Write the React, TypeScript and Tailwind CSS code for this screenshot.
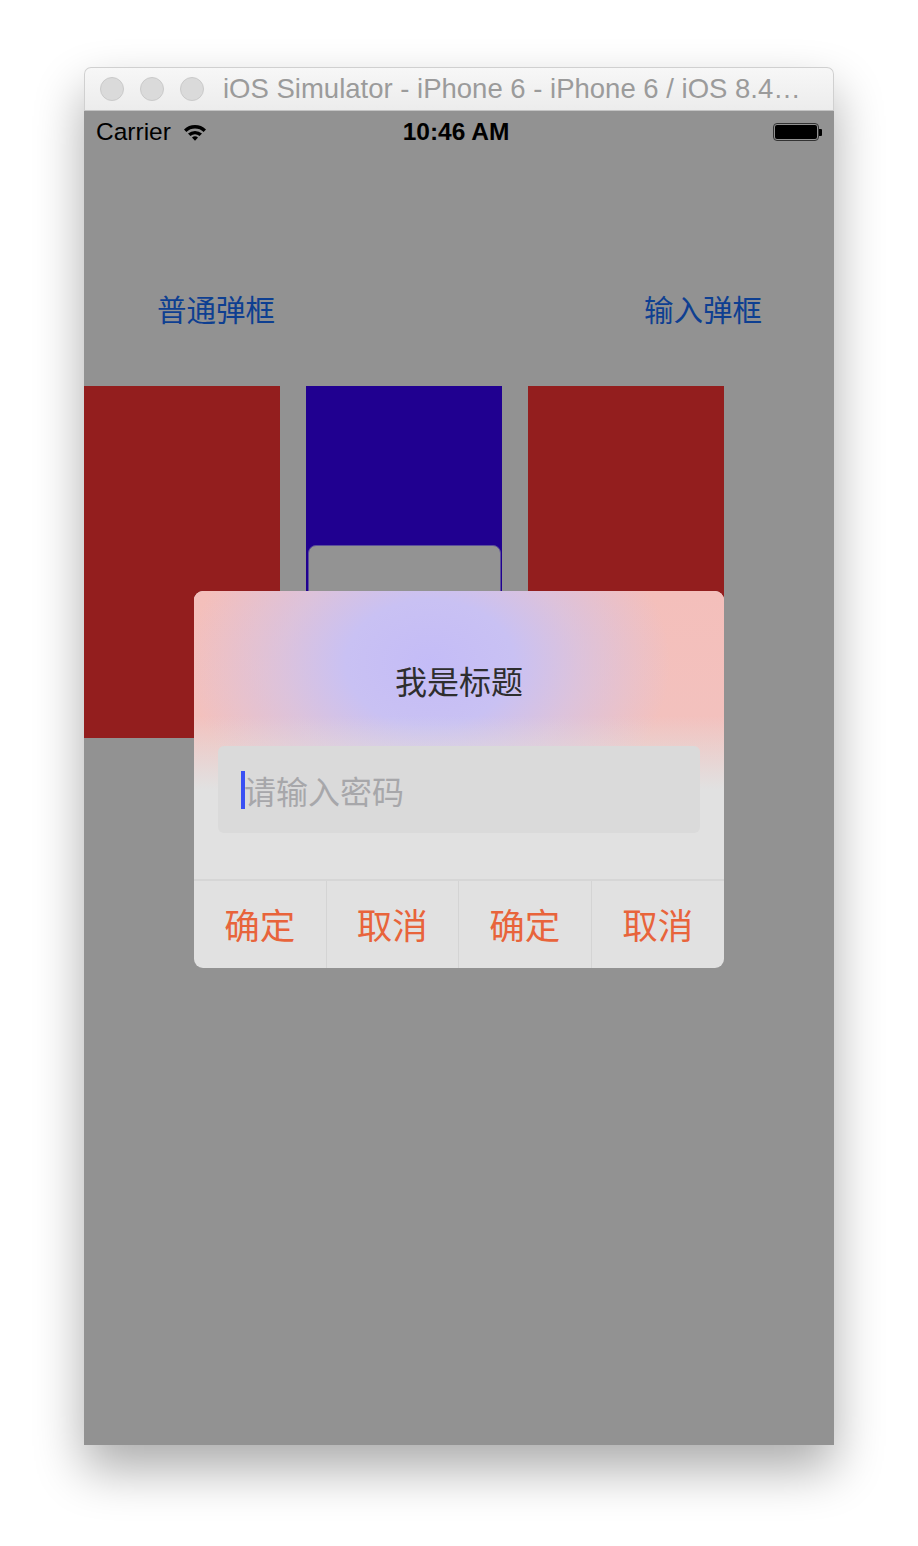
import React from 'react';

const cjk = "font-['Noto_Sans_CJK_SC','Noto_Sans',sans-serif]";
const latin = "font-['Liberation_Sans','Noto_Sans',sans-serif]";

const Wifi = () => (
  <svg width="24" height="18" viewBox="0 0 24 18" className="ml-[12px]">
    <path d="M1 6.5 A16 16 0 0 1 23 6.5 L20.6 9 A12.6 12.6 0 0 0 3.4 9 Z" fill="#000" />
    <path d="M5 10.6 A10.6 10.6 0 0 1 19 10.6 L16.6 13 A7.3 7.3 0 0 0 7.4 13 Z" fill="#000" />
    <path d="M9 14.6 A4.6 4.6 0 0 1 15 14.6 L12 17.8 Z" fill="#000" />
  </svg>
);

const Battery = () => (
  <div className="flex items-center">
    <div className="w-[46px] h-[18px] rounded-[4px] border border-[#333] p-[1px]">
      <div className="w-full h-full bg-black rounded-[2px]" />
    </div>
    <div className="w-[3px] h-[7px] bg-black rounded-r-[1px]" />
  </div>
);

const TitleBar = () => (
  <div className="h-[44px] flex items-center px-[15px] rounded-t-[7px] bg-[linear-gradient(to_bottom,#f7f7f7,#ececec)] border border-[#d0d0d0] border-b-[#c4c4c4]">
    <div className="flex gap-[16px]">
      <div className="w-[24px] h-[24px] rounded-full bg-[#dadada] border border-[#cacaca]" />
      <div className="w-[24px] h-[24px] rounded-full bg-[#dadada] border border-[#cacaca]" />
      <div className="w-[24px] h-[24px] rounded-full bg-[#dadada] border border-[#cacaca]" />
    </div>
    <span className={`${latin} ml-[19px] text-[27.5px] text-[#9b9b9b] whitespace-nowrap`}>
      iOS Simulator - iPhone 6 - iPhone 6 / iOS 8.4…
    </span>
  </div>
);

const AlertDialog = () => (
  <div className="absolute left-[110px] top-[480px] w-[530px] h-[377px] rounded-[9px] overflow-hidden bg-[#e1e1e1] flex flex-col">
    <div className="bg-[linear-gradient(to_bottom,rgba(225,225,225,0)_0px,rgba(225,225,225,0)_125px,rgba(225,225,225,1)_198px),radial-gradient(ellipse_240px_180px_at_236px_72px,#c4bcf7_0%,#c9c1f3_35%,rgba(205,196,240,0.6)_62%,rgba(205,196,240,0)_100%),linear-gradient(to_bottom,#f4bfbb,#f2c3c0)]">
      <div className={`${cjk} h-[155px] flex items-center justify-center pt-[22px] text-[32px] text-[#2e2e2e]`}>
        我是标题
      </div>
      <div className="px-[24px]">
        <div className="h-[87px] rounded-[6px] bg-[#dadada] flex items-center pl-[23px]">
          <div className="w-[4px] h-[38px] bg-[#3a50f4]" />
          <span className={`${cjk} text-[32px] text-[#a7a7aa] leading-none -ml-[1px]`}>请输入密码</span>
        </div>
      </div>
    </div>
    <div className="h-[46px]" />
    <div className="flex-1 grid grid-cols-4 border-t-2 border-[#d6d6d6]">
      {['确定', '取消', '确定', '取消'].map((t, i) => (
        <div
          key={i}
          className={`${cjk} flex items-center justify-center pb-[2px] text-[35.5px] text-[#e8643b] ${i < 3 ? 'border-r border-[#d4d4d4]' : ''}`}
        >
          {t}
        </div>
      ))}
    </div>
  </div>
);

export default function App() {
  return (
    <div className="w-[918px] h-[1546px] bg-white pt-[67px] pl-[84px]">
      <div className="w-[750px] rounded-t-[7px] shadow-[0_24px_50px_rgba(0,0,0,0.33)]">
        <TitleBar />
        <div className="relative h-[1334px] bg-[#929292] overflow-hidden">
          {/* status bar */}
          <div className={`${latin} h-[42px] flex items-center justify-between px-[12px] text-[24.5px] text-black`}>
            <div className="flex items-center w-[200px]">
              <span>Carrier</span>
              <Wifi />
            </div>
            <span className="font-semibold -ml-[6px]">10:46 AM</span>
            <div className="w-[200px] flex justify-end">
              <Battery />
            </div>
          </div>

          {/* top buttons */}
          <div className={`${cjk} mt-[135px] flex justify-between pl-[73px] pr-[72px] text-[29.5px] text-[#0e3f91] leading-[40px]`}>
            <span>普通弹框</span>
            <span>输入弹框</span>
          </div>

          {/* colour blocks */}
          <div className="mt-[58px] flex gap-[26px]">
            <div className="w-[196px] h-[352px] bg-[#931e1e]" />
            <div className="w-[196px] h-[352px] bg-[#200090] pt-[159px] pl-[2px] pr-[1px]">
              <div className="h-[220px] rounded-[8px] bg-[#939393] border border-[#5b4f9a]" />
            </div>
            <div className="w-[196px] h-[352px] bg-[#931e1e]" />
          </div>

          <AlertDialog />
        </div>
      </div>
    </div>
  );
}
